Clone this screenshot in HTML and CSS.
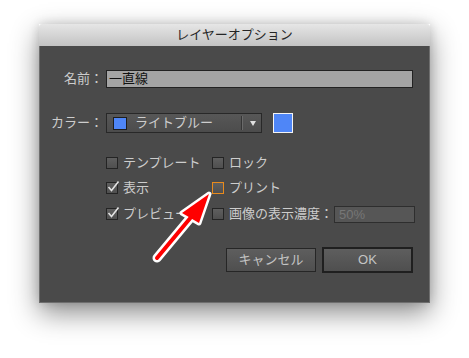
FILE: index.html
```html
<!DOCTYPE html>
<html lang="ja">
<head>
  <meta charset="UTF-8" />
  <meta name="viewport" content="width=device-width, initial-scale=1.0" />
  <link rel="stylesheet" href="styles.css">
</head>
<body>
  <div class="stage">
    <div class="window">
      <div class="titlebar">レイヤーオプション</div>
      <div class="content">

        <!-- 名前 -->
        <div class="row row-name">
          <span class="field-label">名前：</span>
          <div class="text-input">一直線</div>
        </div>

        <!-- カラー -->
        <div class="row row-color">
          <span class="field-label">カラー：</span>
          <div class="select">
            <span class="chip"></span>
            <span class="select-text">ライトブルー</span>
            <span class="select-divider"></span>
            <span class="select-arrow"></span>
          </div>
          <span class="swatch"></span>
        </div>

        <!-- Checkboxes -->
        <div class="checks">
          <div class="check-row">
            <label class="check col1"><span class="box"></span>テンプレート</label>
            <label class="check"><span class="box"></span>ロック</label>
          </div>
          <div class="check-row">
            <label class="check col1"><span class="box checked"><svg class="tick" width="14" height="14" viewBox="0 0 14 14"><polyline points="2.5,7 5.5,10.5 12.5,1.5" fill="none" stroke="#e2e2e2" stroke-width="1.6" /></svg></span>表示</label>
            <label class="check"><span class="box focus"></span>プリント</label>
          </div>
          <div class="check-row last">
            <label class="check col1"><span class="box checked"><svg class="tick" width="14" height="14" viewBox="0 0 14 14"><polyline points="2.5,7 5.5,10.5 12.5,1.5" fill="none" stroke="#e2e2e2" stroke-width="1.6" /></svg></span>プレビュー</label>
            <label class="check"><span class="box"></span>画像の表示濃度：</label>
            <div class="dim-input">50%</div>
          </div>
        </div>

        <!-- Buttons -->
        <div class="buttons">
          <button class="btn">キャンセル</button>
          <button class="btn btn-default">OK</button>
        </div>
      </div>
    </div>

    <!-- Callout arrow -->
    <svg class="arrow" width="80" height="90" viewBox="0 0 80 90">
      <line x1="12" y1="78" x2="47" y2="36" stroke="#fff" stroke-width="9" stroke-linecap="round" />
      <polygon points="64,14 37,33 54,43" fill="#fff" stroke="#fff" stroke-width="5" stroke-linejoin="round" />
      <line x1="12" y1="78" x2="47" y2="36" stroke="#f00" stroke-width="4" stroke-linecap="round" />
      <polygon points="64,14 37,33 54,43" fill="#f00" />
    </svg>
  </div>
</body>
</html>
```

FILE: styles.css
```css
body {
  margin: 0;
  background: #ffffff;
  font-family: "Liberation Sans", "Noto Sans CJK JP", sans-serif;
  font-size: 13px;
  color: #cdcdcd;
}

.stage {
  position: relative;
  width: 469px;
  height: 358px;
  padding: 24px 0 0 39px;
  box-sizing: border-box;
  overflow: hidden;
}

.window {
  width: 391px;
  box-shadow: 0 10px 26px rgba(0, 0, 0, 0.45), 0 0 10px rgba(0, 0, 0, 0.15);
}

.titlebar {
  height: 22px;
  line-height: 22px;
  text-align: center;
  color: #262626;
  background: linear-gradient(#e6e6e6, #c3c3c3);
  border-radius: 3px 3px 0 0;
}

.content {
  background: #4a4a4a;
  border: 1px solid #6e6e6e;
  border-top: none;
  padding: 24px 0 29px 0;
  display: flex;
  flex-direction: column;
}

.row {
  display: flex;
  align-items: center;
}

.row-name {
  height: 18px;
}

.row-color {
  height: 20px;
  margin-top: 25px;
}

.field-label {
  width: 63px;
  margin-right: 3px;
  text-align: right;
  line-height: 18px;
  white-space: nowrap;
}

.text-input {
  width: 307px;
  height: 18px;
  box-sizing: border-box;
  background: #a4a4a4;
  border: 1px solid #222;
  color: #111;
  line-height: 16px;
  padding-left: 2px;
}

.select {
  width: 156px;
  height: 20px;
  box-sizing: border-box;
  border: 1px solid #282828;
  background: linear-gradient(#575757, #4c4c4c);
  display: flex;
  align-items: center;
}

.chip {
  width: 12px;
  height: 11px;
  margin-left: 6px;
  background: #4f86f7;
  border: 1px solid #1e1e1e;
}

.select-text {
  margin-left: 8px;
  line-height: 18px;
  flex: 1;
}

.select-divider {
  width: 1px;
  height: 14px;
  background: #353535;
  border-right: 1px solid #6a6a6a;
}

.select-arrow {
  width: 0;
  height: 0;
  margin: 0 5px 0 7px;
  border-left: 3.5px solid transparent;
  border-right: 3.5px solid transparent;
  border-top: 5px solid #e0e0e0;
}

.swatch {
  width: 18px;
  height: 18px;
  margin-left: 11px;
  background: #4f86f7;
  border: 1px solid #f4f4f4;
}

.checks {
  margin-top: 20px;
  margin-left: 66px;
  display: flex;
  flex-direction: column;
  gap: 5px;
}

.check-row {
  height: 20px;
  display: flex;
  align-items: center;
}

.check-row.last {
  margin-top: 1px;
}

.check {
  display: flex;
  align-items: center;
  line-height: 20px;
  white-space: nowrap;
}

.col1 {
  width: 106px;
}

.box {
  position: relative;
  width: 10px;
  height: 10px;
  margin-right: 5px;
  border: 1px solid #242424;
  background: linear-gradient(#5f5f5f, #4f4f4f);
}

.box.focus {
  border-color: #e88a1c;
}

.tick {
  position: absolute;
  left: -1px;
  top: -3px;
}

.dim-input {
  width: 81px;
  height: 17px;
  box-sizing: border-box;
  margin-left: 1px;
  border: 1px solid #2e2e2e;
  background: #565656;
  color: #777;
  line-height: 15px;
  padding-left: 4px;
}

.buttons {
  margin-top: 23px;
  height: 26px;
  padding-right: 16px;
  display: flex;
  justify-content: flex-end;
  align-items: center;
  gap: 6px;
}

.btn {
  font-family: "Liberation Sans", "Noto Sans CJK JP", sans-serif;
  font-size: 13px;
  color: #c4c4c4;
  width: 90px;
  height: 24px;
  padding: 0;
  border: 1px solid #262626;
  background: linear-gradient(#5e5e5e, #4f4f4f);
  line-height: 20px;
}

.btn-default {
  width: 91px;
  height: 26px;
  border: 2px solid #1f1f1f;
}

.arrow {
  position: absolute;
  left: 145px;
  top: 180px;
}
```
